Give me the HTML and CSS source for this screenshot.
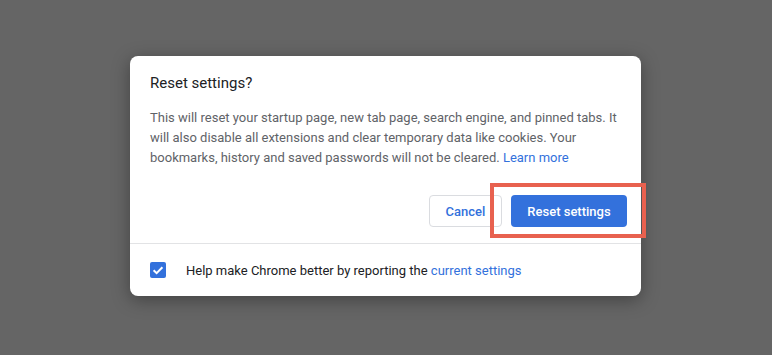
FILE: index.html
```html
<!DOCTYPE html>
<html lang="en">
<head>
<meta charset="UTF-8" />
<title>Reset settings</title>
<link rel="stylesheet" href="styles.css">
</head>
<body>

<!-- DIALOG -->
<div class="dialog" role="dialog" aria-labelledby="dialog-title">
  <div class="dialog-body">
    <h1 class="dialog-title" id="dialog-title">Reset settings?</h1>
    <p class="dialog-text">This will reset your startup page, new tab page, search engine, and pinned tabs. It will also disable all extensions and clear temporary data like cookies. Your bookmarks, history and saved passwords will not be cleared. <a href="#">Learn more</a></p>
  </div>

  <div class="dialog-buttons">
    <button class="btn btn-cancel">Cancel</button>
    <span class="highlight">
      <button class="btn btn-action">Reset settings</button>
    </span>
  </div>

  <div class="dialog-footer">
    <span class="checkbox" aria-checked="true" role="checkbox">
      <svg width="16" height="16" viewBox="0 0 16 16" aria-hidden="true">
        <path d="M3.6 8.2 L6.6 11.1 L12.4 5.2" fill="none" stroke="#fff" stroke-width="2" />
      </svg>
    </span>
    <span class="footer-label">Help make Chrome better by reporting the <a href="#">current settings</a></span>
  </div>
</div>

</body>
</html>
```

FILE: styles.css
```css
/* Reset */
*, *::before, *::after {
  box-sizing: border-box;
}
body, h1, p, a, button {
  margin: 0;
  padding: 0;
  font-family: Roboto, 'Liberation Sans', Arial, sans-serif;
}
a {
  text-decoration: none;
  color: var(--blue);
}
button {
  cursor: pointer;
  border: none;
  background: none;
}

/* Variables */
:root {
  --blue: #3371dc;
  --text-dark: #202124;
  --text-gray: #5f6368;
  --line: #e2e3e5;
  --annotation: #e8614f;
}

body {
  background: #656565;
  min-height: 100vh;
  padding: 56px 0 0 130px;
}

/* Dialog */
.dialog {
  width: 511px;
  background: white;
  border-radius: 8px;
  box-shadow: 0 4px 18px rgba(0,0,0,0.35);
}
.dialog-body {
  padding: 17px 20px 0;
}
.dialog-title {
  font-size: 15px;
  font-weight: 400;
  line-height: 20px;
  color: var(--text-dark);
}
.dialog-text {
  margin-top: 15px;
  font-size: 13px;
  line-height: 20px;
  color: var(--text-gray);
}

/* Buttons */
.dialog-buttons {
  display: flex;
  justify-content: flex-end;
  align-items: center;
  gap: 9px;
  padding: 27px 14px 16px;
}
.btn {
  height: 32px;
  padding: 0 15px;
  border-radius: 4px;
  font-size: 13px;
  font-weight: 500;
}
.btn-cancel {
  width: 73px;
  border: 1px solid #dadce0;
  color: var(--blue);
}
.btn-action {
  width: 116px;
  background: var(--blue);
  color: white;
}
.highlight {
  position: relative;
  display: flex;
}
.highlight::after {
  content: "";
  position: absolute;
  top: -12px;
  bottom: -11px;
  left: -21px;
  right: -19px;
  border: 4px solid var(--annotation);
  pointer-events: none;
}

/* Footer */
.dialog-footer {
  height: 53px;
  border-top: 1px solid var(--line);
  padding: 0 20px;
  display: flex;
  align-items: center;
  gap: 20px;
}
.checkbox {
  width: 16px;
  height: 16px;
  border-radius: 2px;
  background: var(--blue);
  display: flex;
}
.footer-label {
  font-size: 13px;
  color: var(--text-dark);
}
```
